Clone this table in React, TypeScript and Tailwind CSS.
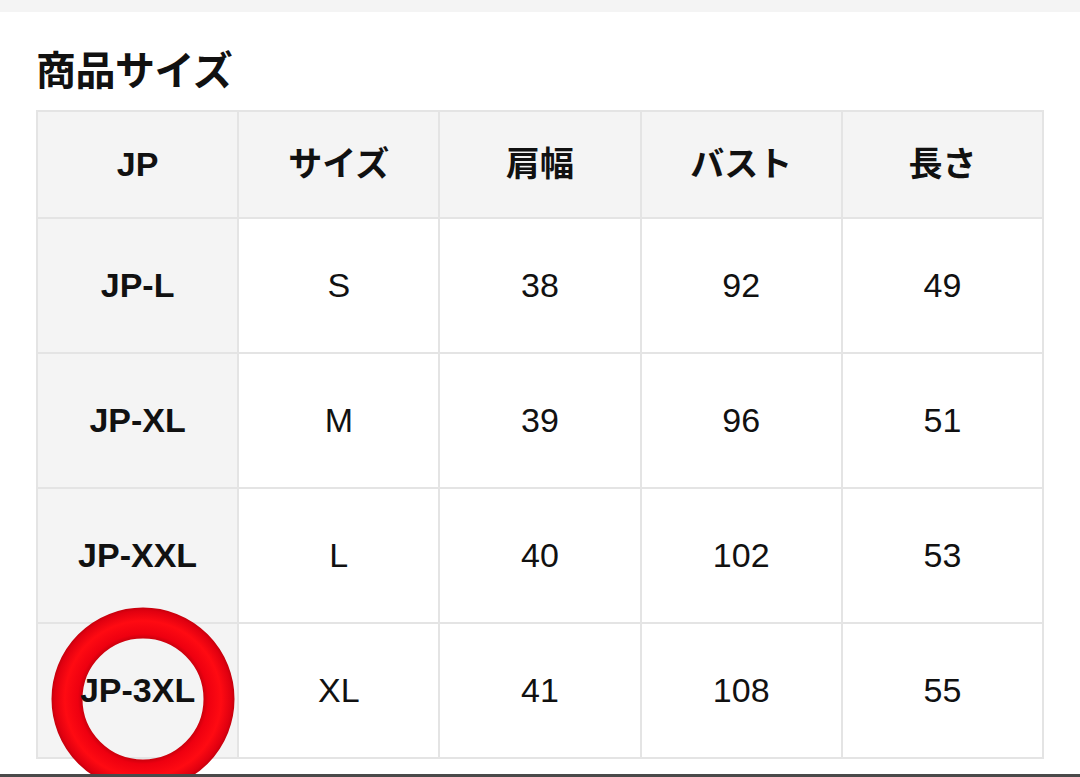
import React from "react";

const headers = ["JP", "サイズ", "肩幅", "バスト", "長さ"];

const rows = [
  ["JP-L", "S", "38", "92", "49"],
  ["JP-XL", "M", "39", "96", "51"],
  ["JP-XXL", "L", "40", "102", "53"],
  ["JP-3XL", "XL", "41", "108", "55"],
];

const RedRing = () => (
  <svg
    width="190"
    height="190"
    viewBox="0 0 190 190"
    className="absolute left-[10px] top-[-20px] pointer-events-none"
  >
    <defs>
      <radialGradient id="ring" cx="95" cy="95" r="93" gradientUnits="userSpaceOnUse">
        <stop offset="0.64" stopColor="#c3000c" />
        <stop offset="0.7" stopColor="#ee0010" />
        <stop offset="0.84" stopColor="#ff0a12" />
        <stop offset="0.95" stopColor="#e00010" />
        <stop offset="1" stopColor="#b8000a" />
      </radialGradient>
    </defs>
    <circle cx="95" cy="95" r="76" fill="none" stroke="url(#ring)" strokeWidth="31" />
  </svg>
);

const App = () => {
  return (
    <div
      className="relative flex h-[777px] w-[1080px] flex-col overflow-hidden bg-white text-[#111]"
      style={{ fontFamily: '"Liberation Sans", "Noto Sans CJK JP", sans-serif' }}
    >
      <div className="h-3 bg-[#f4f4f4]" />
      <div className="px-9">
        <h2 className="mt-[39px] mb-[19px] text-[40px] leading-[40px] font-bold tracking-[-0.5px]">
          商品サイズ
        </h2>
        <div className="grid w-[1008px] grid-cols-5 border-t-2 border-l-2 border-[#e4e4e4]">
          {headers.map((h) => (
            <div
              key={h}
              className="flex h-[107px] items-center justify-center border-r-2 border-b-2 border-[#e4e4e4] bg-[#f4f4f4] text-[34px] font-bold"
            >
              {h}
            </div>
          ))}
          {rows.map((row, ri) =>
            row.map((cell, ci) => (
              <div
                key={ri + "-" + ci}
                className={
                  ci === 0
                    ? "relative flex h-[135px] items-center justify-center border-r-2 border-b-2 border-[#e4e4e4] bg-[#f4f4f4] text-[34px] font-bold"
                    : "flex h-[135px] items-center justify-center border-r-2 border-b-2 border-[#e4e4e4] bg-white text-[34px]"
                }
              >
                {ri === rows.length - 1 && ci === 0 && <RedRing />}
                <span className="relative">{cell}</span>
              </div>
            ))
          )}
        </div>
      </div>
      <div className="relative z-10 mt-auto h-[3px] bg-[#4a4a4a]" />
    </div>
  );
};

export default App;
